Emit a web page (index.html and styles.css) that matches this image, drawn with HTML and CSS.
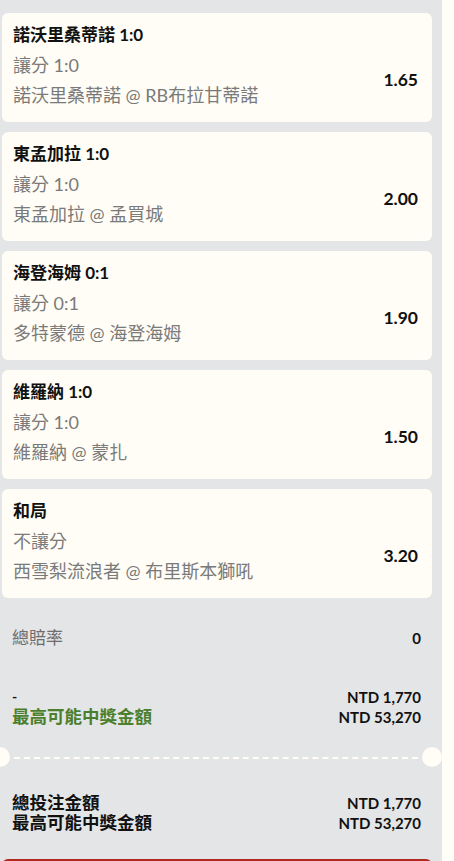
FILE: index.html
```html
<!DOCTYPE html>
<html lang="zh-Hant">
<head>
    <meta charset="UTF-8">
    <meta name="viewport" content="width=device-width, initial-scale=1.0">
    <title>投注單</title>
    <link rel="stylesheet" href="styles.css">
</head>
<body>
    <div class="slip">
        <div class="bets">
            <div class="bet">
                <div class="bet-info">
                    <div class="bet-title">諾沃里桑蒂諾 1:0</div>
                    <div class="bet-line">讓分 1:0</div>
                    <div class="bet-line">諾沃里桑蒂諾 @ RB布拉甘蒂諾</div>
                </div>
                <div class="bet-odds">1.65</div>
            </div>
            <div class="bet">
                <div class="bet-info">
                    <div class="bet-title">東孟加拉 1:0</div>
                    <div class="bet-line">讓分 1:0</div>
                    <div class="bet-line">東孟加拉 @ 孟買城</div>
                </div>
                <div class="bet-odds">2.00</div>
            </div>
            <div class="bet">
                <div class="bet-info">
                    <div class="bet-title">海登海姆 0:1</div>
                    <div class="bet-line">讓分 0:1</div>
                    <div class="bet-line">多特蒙德 @ 海登海姆</div>
                </div>
                <div class="bet-odds">1.90</div>
            </div>
            <div class="bet">
                <div class="bet-info">
                    <div class="bet-title">維羅納 1:0</div>
                    <div class="bet-line">讓分 1:0</div>
                    <div class="bet-line">維羅納 @ 蒙扎</div>
                </div>
                <div class="bet-odds">1.50</div>
            </div>
            <div class="bet">
                <div class="bet-info">
                    <div class="bet-title">和局</div>
                    <div class="bet-line">不讓分</div>
                    <div class="bet-line">西雪梨流浪者 @ 布里斯本獅吼</div>
                </div>
                <div class="bet-odds">3.20</div>
            </div>
        </div>

        <div class="summary">
            <div class="row total-odds">
                <span class="label">總賠率</span>
                <span class="value">0</span>
            </div>
            <div class="amounts">
                <div class="row">
                    <span class="dash">-</span>
                    <span class="value">NTD 1,770</span>
                </div>
                <div class="row">
                    <span class="win">最高可能中獎金額</span>
                    <span class="value">NTD 53,270</span>
                </div>
            </div>
        </div>

        <div class="divider"></div>

        <div class="totals">
            <div class="row">
                <span class="strong">總投注金額</span>
                <span class="value">NTD 1,770</span>
            </div>
            <div class="row">
                <span class="strong">最高可能中獎金額</span>
                <span class="value">NTD 53,270</span>
            </div>
        </div>

        <button class="place-bet" type="button"></button>
    </div>
</body>
</html>
```

FILE: styles.css
```css
body {
    margin: 0;
    padding: 0;
    background-color: #fffef7;
    font-family: Lato, "Noto Sans CJK TC", sans-serif;
    color: #111;
    overflow: hidden;
}
.slip {
    width: 442px;
    height: 861px;
    background-color: #e4e5e7;
    padding-top: 13px;
    box-sizing: border-box;
    overflow: hidden;
}
.bets {
    display: flex;
    flex-direction: column;
    gap: 10px;
    padding: 0 10px 0 2px;
}
.bet {
    background-color: #fffdf5;
    border-radius: 6px;
    padding: 7px 14px 12px 11px;
    display: flex;
    justify-content: space-between;
}
.bet-title {
    font-size: 17px;
    font-weight: bold;
    line-height: 30px;
}
.bet-line {
    font-size: 18px;
    color: #7a7a7a;
    line-height: 30px;
}
.bet-odds {
    font-size: 17.5px;
    font-weight: bold;
    padding-top: 49px;
}
.summary {
    padding: 0 21px 0 12px;
}
.row {
    display: flex;
    justify-content: space-between;
    align-items: center;
    line-height: 20px;
}
.total-odds {
    height: 30px;
    margin-top: 25px;
}
.total-odds .label {
    font-size: 17px;
    color: #6e6e6e;
}
.value {
    font-size: 15px;
    font-weight: bold;
}
.amounts {
    margin-top: 34px;
}
.amounts .row,
.totals .row {
    height: 20px;
}
.dash {
    font-size: 14px;
    font-weight: bold;
}
.win {
    font-size: 17.5px;
    font-weight: bold;
    color: #4b7f2c;
}
.divider {
    position: relative;
    height: 20px;
    margin-top: 20px;
}
.divider::before {
    content: "";
    position: absolute;
    left: 14px;
    right: 24px;
    top: 10px;
    border-top: 2px dashed #fffdf5;
}
.divider::after {
    content: "";
    position: absolute;
    left: -10px;
    top: 0;
    width: 20px;
    height: 20px;
    border-radius: 50%;
    background-color: #fffdf5;
    box-shadow: 432px 0 0 #fffdf5;
}
.totals {
    margin-top: 26px;
    padding: 0 21px 0 12px;
}
.totals .strong {
    font-size: 17.5px;
    font-weight: bold;
}
.place-bet {
    display: block;
    margin: 26px 0 0 2px;
    width: 430px;
    height: 50px;
    border: none;
    border-radius: 6px;
    background-color: #b0281f;
}
```
